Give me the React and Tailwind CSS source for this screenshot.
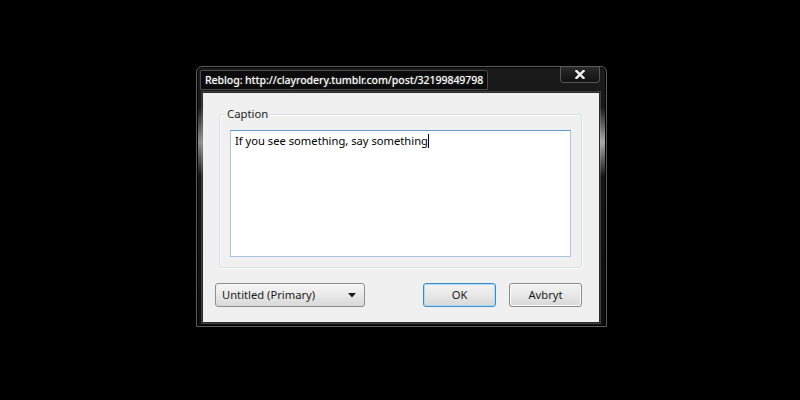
import React from "react";

export default function App() {
  const ui = { fontFamily: '"Segoe UI", "Noto Sans", "DejaVu Sans", sans-serif' };
  return (
    <div className="w-[800px] h-[400px] bg-black overflow-hidden" style={ui}>
      <div className="pt-[66px] pl-[196px]">
        <div className="relative w-[411px] h-[261px] rounded-t-[6px] border border-[#5c5c5c] bg-gradient-to-b from-[#1a1a1a] to-[#0c0c0c] shadow-[inset_0_0_0_1px_#000]">
          {/* glass highlights */}
          <div className="absolute left-[1px] top-[40px] w-[5px] h-[70px] bg-gradient-to-b from-transparent via-[#bdbdbd] to-transparent opacity-70" />
          <div className="absolute right-[1px] top-[40px] w-[5px] h-[70px] bg-gradient-to-b from-transparent via-[#cfcfcf] to-transparent opacity-80" />
          {/* title row */}
          <div className="flex h-[25px] items-start">
            <div className="ml-[3px] mt-[3px] h-[20px] w-[288px] rounded-tr-[3px] rounded-tl-[2px] border border-[#4a4a4a] bg-[#0a0a0a] flex items-center pl-[4px]">
              <span className="text-white text-[10.6px] font-medium leading-none whitespace-nowrap tracking-[-0.1px]" style={{ textShadow: "0 0 3px rgba(255,255,255,0.25)" }}>
                Reblog: http://clayrodery.tumblr.com/post/32199849798
              </span>
            </div>
            <div className="ml-auto mr-[6px] h-[16px] w-[40px] rounded-b-[4px] border border-t-0 border-[#555] bg-gradient-to-b from-[#2a2a2a] to-[#111] flex items-center justify-center">
              <svg width="10" height="9" viewBox="0 0 10 9">
                <path d="M1.5 1 L8.5 8 M8.5 1 L1.5 8" stroke="#f2f2f2" strokeWidth="2.4" strokeLinecap="square" />
              </svg>
            </div>
          </div>
          {/* client area */}
          <div className="ml-[5px] mt-[0px] w-[398px] h-[231px] border border-[#2c2c2c] outline outline-1 outline-[#3e3e3e]">
            <div className="w-full h-full bg-[#f0f0f0] pt-[21px] px-[15px]">
              {/* group box */}
              <div className="relative ml-[1px] w-[363px] h-[154px] rounded-[3px] border border-[#d5dfe5] shadow-[inset_1px_1px_0_#fff,1px_1px_0_#fff] pt-[15px] px-[10px]">
                <span className="absolute left-[5px] top-[-9px] bg-[#f0f0f0] px-[2px] text-[11.3px] leading-[16px] text-[#1e1e1e]">
                  Caption
                </span>
                <div className="w-[341px] h-[127px] bg-white border border-[#abc5e0] border-t-[#5d9ad3] pl-[4px] pt-[1px] leading-[14px]">
                  <span className="text-[11.2px] leading-[14px] text-black whitespace-nowrap">
                    If you see something, say something
                  </span>
                  <span className="inline-block w-[1px] h-[14px] bg-black align-[-3px]" />
                </div>
              </div>
              {/* bottom row */}
              <div className="flex items-center mt-[15px] -ml-[3px]">
                <div className="w-[150px] h-[24px] rounded-[3px] border border-[#8d8d8d] bg-gradient-to-b from-[#f6f6f6] via-[#e9e9e9] to-[#d8d8d8] flex items-center pl-[6px] pr-[8px]">
                  <span className="text-[11.2px] text-[#1a1a1a] whitespace-nowrap">Untitled (Primary)</span>
                  <svg className="ml-auto" width="8" height="5" viewBox="0 0 8 5">
                    <path d="M0 0 H8 L4 4.5 Z" fill="#1a1a1a" />
                  </svg>
                </div>
                <div className="ml-[58px] w-[73px] h-[24px] rounded-[3px] border border-[#3c8ccc] shadow-[inset_0_0_0_1px_#a9dcf6] bg-gradient-to-b from-[#f2f2f2] via-[#e8e8e8] to-[#d7d7d7] flex items-center justify-center">
                  <span className="text-[11.2px] text-[#1a1a1a]">OK</span>
                </div>
                <div className="ml-[13px] w-[73px] h-[24px] rounded-[3px] border border-[#8a8a8a] shadow-[inset_0_0_0_1px_#fcfcfc] bg-gradient-to-b from-[#f2f2f2] via-[#e8e8e8] to-[#d7d7d7] flex items-center justify-center">
                  <span className="text-[11.2px] text-[#1a1a1a]">Avbryt</span>
                </div>
              </div>
            </div>
          </div>
        </div>
      </div>
    </div>
  );
}
